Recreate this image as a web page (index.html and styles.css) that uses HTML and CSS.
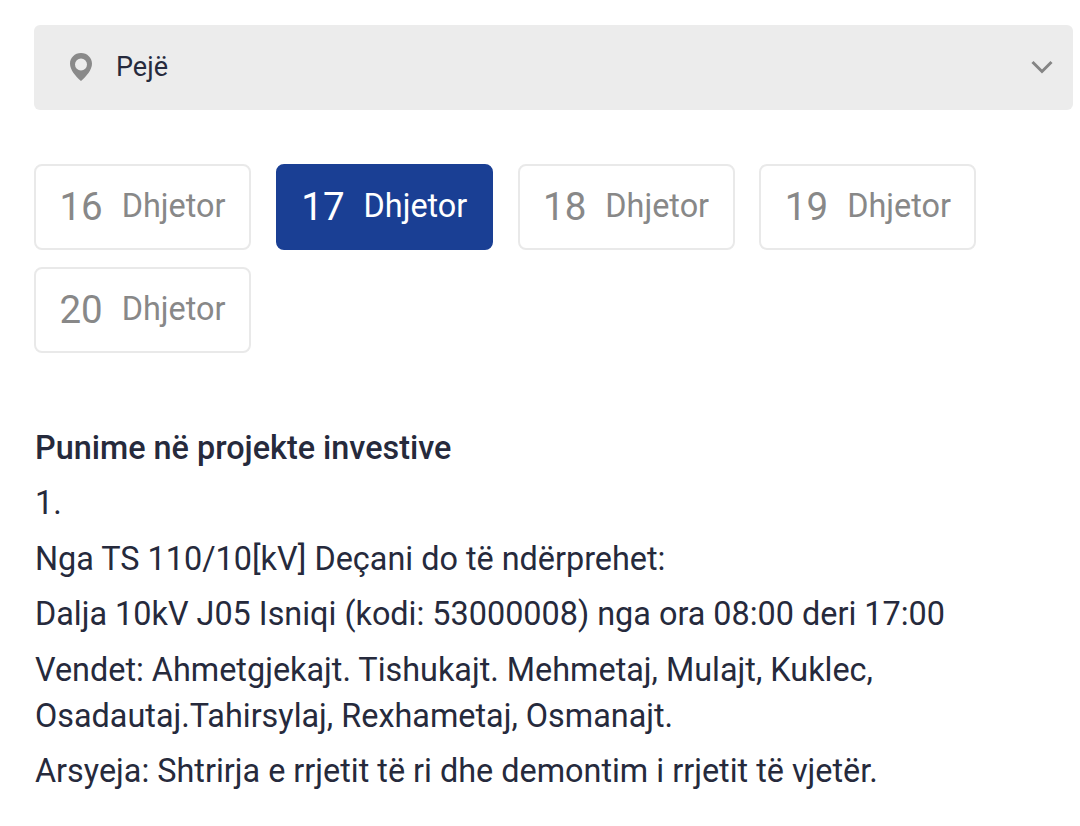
FILE: index.html
```html
<!DOCTYPE html>
<html>
<head>
    <meta charset="UTF-8">
    <title>Pejë</title>
    <link rel="stylesheet" href="styles.css">
</head>
<body>
<div class="page">
    <div class="select">
        <svg class="pin" width="24" height="30" viewBox="0 0 24 30">
            <path fill="#8a8a8a" fill-rule="evenodd" d="M12 1C5.700 1 1 5.800 1 11.800c0 6 5.600 12.700 11 17.200 5.400-4.500 11-11.200 11-17.200C23 5.800 18.300 1 12 1zm0 5.500a6 6 0 1 1 0 12 6 6 0 0 1 0-12z"/>
        </svg>
        <span class="select-text">Pejë</span>
        <svg class="chevron" width="22" height="14" viewBox="0 0 22 14">
            <path fill="none" stroke="#858585" stroke-width="3" d="M1.500 2l9.500 9.500L20.500 2"/>
        </svg>
    </div>

    <div class="dates">
        <div class="date"><span class="day">16</span><span class="month">Dhjetor</span></div>
        <div class="date active"><span class="day">17</span><span class="month">Dhjetor</span></div>
        <div class="date"><span class="day">18</span><span class="month">Dhjetor</span></div>
        <div class="date"><span class="day">19</span><span class="month">Dhjetor</span></div>
        <div class="date"><span class="day">20</span><span class="month">Dhjetor</span></div>
    </div>

    <div class="notice">
        <p class="title">Punime në projekte investive</p>
        <p>1.</p>
        <p>Nga TS 110/10[kV] Deçani do të ndërprehet:</p>
        <p>Dalja 10kV J05 Isniqi (kodi: 53000008) nga ora 08:00 deri 17:00</p>
        <p>Vendet: Ahmetgjekajt. Tishukajt. Mehmetaj, Mulajt, Kuklec, Osadautaj.Tahirsylaj, Rexhametaj, Osmanajt.</p>
        <p>Arsyeja: Shtrirja e rrjetit të ri dhe demontim i rrjetit të vjetër.</p>
    </div>
</div>
</body>
</html>
```

FILE: styles.css
```css
html, body, div, p, span {
    margin: 0;
    padding: 0;
}

body {
    background: #fff;
    font-family: Roboto, "Liberation Sans", sans-serif;
    color: #262a3c;
}

.page {
    width: 1039px;
    padding: 25px 0 0 34px;
}

.select {
    display: flex;
    align-items: center;
    height: 85px;
    padding: 0 20px 2px 35px;
    box-sizing: border-box;
    background: #ececec;
    border-radius: 6px;
}

.select-text {
    margin-left: 23px;
    font-size: 27px;
    flex: 1;
}

.chevron {
    display: block;
}

.dates {
    display: flex;
    flex-wrap: wrap;
    gap: 17px 24.800px;
    margin-top: 54px;
}

.date {
    display: flex;
    align-items: center;
    justify-content: center;
    box-sizing: border-box;
    width: 217px;
    height: 86px;
    padding-bottom: 2px;
    border: 2px solid #e9e9e9;
    border-radius: 8px;
    color: #888;
}

.date.active {
    background: #1a3f94;
    border-color: #1a3f94;
    color: #fff;
}

.day {
    font-size: 38.500px;
    margin-right: 19px;
}

.month {
    font-size: 32.400px;
}

.notice {
    margin-top: 71.500px;
    padding-left: 1px;
    font-size: 32.380px;
    line-height: 46px;
}

.notice p {
    margin-bottom: 9.500px;
}

.notice .title {
    font-weight: 500;
}
```
